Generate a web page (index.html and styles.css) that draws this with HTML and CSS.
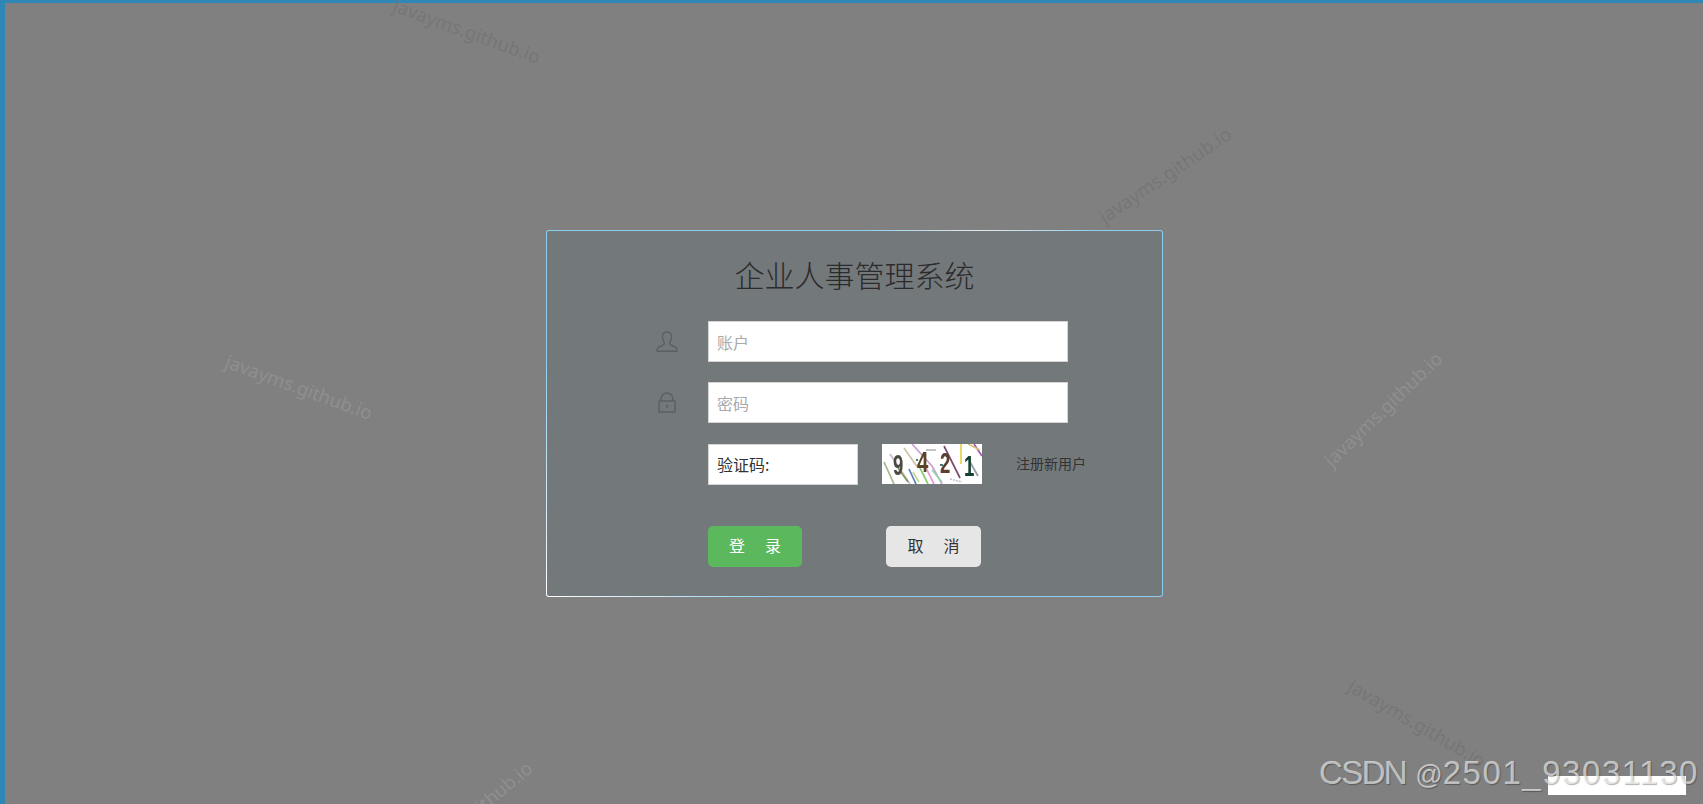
FILE: index.html
```html
<!DOCTYPE html>
<html lang="zh-CN">
<head>
<meta charset="utf-8">
<title>企业人事管理系统</title>
<link rel="stylesheet" href="styles.css">
</head>
<body>
<main class="stage">
  <form class="card">
    <h1 class="title">企业人事管理系统</h1>
    <div class="row">
      <span class="icon-cell">
        <svg class="icon" width="22" height="22" viewBox="0 0 22 22" fill="none" stroke="#596063" stroke-width="1.400" stroke-linejoin="round"><path d="M11 1C8 1 6.400 3 6.400 5.800c0 2.500.8 4.200 1.600 5.200.9 1.100.1 2.600-1 3.200-1.500.8-3.500 1.300-4.700 2.300-1 .8-1.400 2.300-1.300 3.700h20c.1-1.400-.3-2.900-1.300-3.700-1.200-1-3.200-1.500-4.700-2.300-1.100-.6-1.900-2.100-1-3.200.8-1 1.600-2.700 1.600-5.200C15.600 3 14 1 11 1z"/></svg>
      </span>
      <input class="field field-wide" type="text" placeholder="账户">
    </div>
    <div class="row row-second">
      <span class="icon-cell">
        <svg class="icon" width="18" height="21" viewBox="0 0 18 21" fill="none" stroke="#596063" stroke-width="1.400"><path d="M3 9V7a6 6 0 0 1 12 0v2"/><rect x="1" y="9" width="16" height="11"/><rect x="8.200" y="13" width="1.600" height="2.600" fill="#596063" stroke="none"/></svg>
      </span>
      <input class="field field-wide" type="password" placeholder="密码">
    </div>
    <div class="row">
      <span class="icon-cell"></span>
      <input class="field field-code" type="text" value="验证码:">
      <svg class="captcha" width="100" height="40" viewBox="0 0 100 40">
        <rect width="100" height="40" fill="#fff"/>
        <g fill="none" stroke-width="1.700">
          <path d="M2 18 12 40" stroke="#a5b88a"/>
          <path d="M8 10 28 40" stroke="#d3b6cc"/>
          <path d="M16 24 26 38" stroke="#7d9d5c"/>
          <path d="M22 4 36 24" stroke="#cfc4a8"/>
          <path d="M30 0 50 22 60 40" stroke="#c9a0d0"/>
          <path d="M27 25 34 40" stroke="#5d7fc0"/>
          <path d="M36 20 46 40" stroke="#86d07a"/>
          <path d="M31 28 37 38" stroke="#c2d88a"/>
          <path d="M42 20 52 40" stroke="#e69ad6"/>
          <path d="M50 26 60 38" stroke="#8fd8b0"/>
          <path d="M62 2 78 34" stroke="#7b4b6e"/>
          <path d="M79 0V20" stroke="#e6d24a"/>
          <path d="M92 0 100 12" stroke="#a34fb5"/>
          <path d="M86 0 98 6" stroke="#d8c27a"/>
          <path d="M88 18 96 32" stroke="#8f9ba5"/>
          <path d="M68 35 80 38" stroke="#c4c4d0" stroke-dasharray="2 1"/>
          <path d="M44 6 54 6" stroke="#b9b9b9"/>
          <path d="M34 16h2M58 21h3" stroke="#52727a" stroke-width="2"/>
        </g>
        <text class="digit" transform="translate(11 31) scale(.62 1)" fill="#4a4a42">9</text>
        <text class="digit" transform="translate(35 28) scale(.68 1)" fill="#5a4426">4</text>
        <text class="digit" transform="translate(58 29) scale(.62 1)" fill="#5b4030">2</text>
        <text class="digit" transform="translate(82 32) scale(.62 1)" fill="#12412c">1</text>
      </svg>
      <a class="register" href="#">注册新用户</a>
    </div>
    <div class="row row-actions">
      <span class="icon-cell"></span>
      <button class="btn btn-login" type="button">登&emsp;录</button>
      <button class="btn btn-cancel" type="button">取&emsp;消</button>
    </div>
  </form>
</main>

<div class="marks">
  <span class="mark mark-a">javayms.github.io</span>
  <span class="mark mark-b">javayms.github.io</span>
  <span class="mark mark-c">javayms.github.io</span>
  <span class="mark mark-d">javayms.github.io</span>
  <span class="mark mark-e">javayms.github.io</span>
  <span class="mark mark-f">javayms.github.io</span>
  <span class="white-patch"></span>
  <span class="csdn"><span class="csdn-name">CSDN</span> <span class="csdn-at">@</span><span class="csdn-id">2501_93031130</span></span>
</div>
</body>
</html>
```
FILE: styles.css
```css
* { box-sizing: border-box; }

html, body { height: 100%; overflow: hidden; }

body {
  margin: 0;
  background: #808080;
  font-family: "Noto Sans CJK SC", "Noto Sans", sans-serif;
  color: #333;
}

.stage {
  height: 804px;
  border-top: 3px solid #2f87b6;
  border-left: 5px solid #2f87b6;
  padding: 227px 0 0 541px;
}

.card {
  width: 617px;
  height: 367px;
  border: 1px solid transparent;
  border-radius: 3px;
  background:
    linear-gradient(#73787b, #73787b) padding-box,
    radial-gradient(circle 240px at 0 100%, #fff 0, rgba(255, 255, 255, 0) 100%) border-box,
    radial-gradient(ellipse 120px 20px at 70% 0, #e8e8e8 0, rgba(255, 255, 255, 0) 100%) border-box,
    linear-gradient(#8ccdf0, #8ccdf0) border-box;
}

.title {
  margin: 0;
  height: 90px;
  padding-top: 23px;
  text-align: center;
  font-size: 30px;
  line-height: 40px;
  font-weight: 300;
  color: #2b2b2b;
}

.row {
  display: flex;
  align-items: flex-start;
  height: 41px;
  margin-bottom: 20px;
}

.row-second { margin-bottom: 21px; }
.row-actions { margin-top: 41px; margin-bottom: 0; }

.icon-cell {
  flex: none;
  width: 161px;
  height: 100%;
  padding-left: 78px;
  display: flex;
  align-items: center;
  justify-content: center;
}

.icon { display: block; }

.field {
  height: 41px;
  padding: 0 8px;
  border: 1px solid #d4d4d4;
  border-radius: 0;
  background: #fff;
  font: 16px "Noto Sans CJK SC", "Noto Sans", sans-serif;
  color: #333;
  outline: none;
}

.field::placeholder { color: #a9a9a9; opacity: 1; }

.field-wide { width: 360px; }
.field-code { width: 150px; padding-bottom: 2px; }

.captcha {
  display: block;
  flex: none;
  margin-left: 24px;
  filter: blur(.7px);
}

.digit {
  font: 700 30px "Liberation Sans", sans-serif;
}

.register {
  margin-left: 34px;
  line-height: 38px;
  font-size: 14px;
  color: #333;
  text-decoration: none;
}

.btn {
  display: block;
  height: 41px;
  border: 0;
  border-radius: 5px;
  padding: 0 0 3px 2px;
  font: 16px "Noto Sans CJK SC", "Noto Sans", sans-serif;
  letter-spacing: 2px;
}

.btn-login { width: 94px; background: #5cb85c; color: #fff; }
.btn-cancel { width: 95px; margin-left: 84px; background: #e6e6e6; color: #333; }

.marks {
  position: absolute;
  inset: 0;
  overflow: hidden;
  pointer-events: none;
}

.mark {
  position: absolute;
  width: 180px;
  text-align: center;
  font: 18.7px/28px "Noto Sans", sans-serif;
  white-space: nowrap;
  color: #767676;
}

.mark-a { left: 377px;  top: 17px;  transform: rotate(20deg); }
.mark-b { left: 1075px; top: 161px; transform: rotate(-34deg); }
.mark-c { left: 209px;  top: 373px; transform: rotate(20deg); color: #8f8f8f; }
.mark-d { left: 1293px; top: 395px; transform: rotate(-44deg); color: #8f8f8f; }
.mark-e { left: 1327px; top: 709px; transform: rotate(30deg); }
.mark-f { left: 380px;  top: 801px; transform: rotate(-40deg); color: #8f8f8f; }

.white-patch {
  position: absolute;
  left: 1548px;
  top: 776px;
  width: 138px;
  height: 19px;
  background: #fff;
}

.csdn {
  position: absolute;
  left: 1319px;
  top: 754px;
  font: 33px/38px "Liberation Sans", sans-serif;
  white-space: nowrap;
  color: rgba(255, 255, 255, .62);
  text-shadow: 1px 1px 1px rgba(0, 0, 0, .3);
}

.csdn-name { letter-spacing: -1.6px; }
.csdn-at { font-size: 27px; }
.csdn-id { letter-spacing: 1.55px; }
```
